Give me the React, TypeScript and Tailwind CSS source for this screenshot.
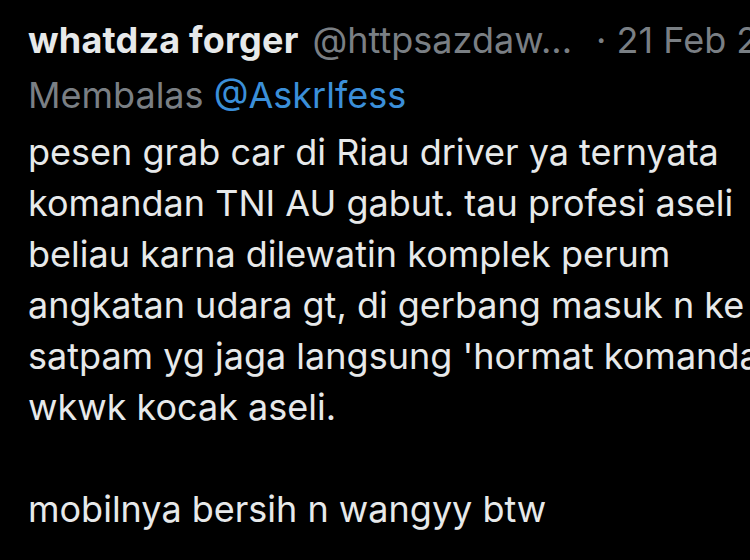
export default function App() {
  const lines = [
    "pesen grab car di Riau driver ya ternyata",
    "komandan TNI AU gabut. tau profesi aseli",
    "beliau karna dilewatin komplek perum",
    "angkatan udara gt, di gerbang masuk n ke",
    "satpam yg jaga langsung 'hormat komanda",
    "wkwk kocak aseli.",
    "",
    "mobilnya bersih n wangyy btw",
  ];

  return (
    <div className="h-[560px] w-[750px] overflow-hidden bg-black pl-[28px] font-['Inter',sans-serif] text-[36px] text-[#e7e9ea]">
      <div className="flex items-baseline whitespace-nowrap pt-[18px] leading-[44px]">
        <span className="font-bold tracking-[0.2px]">whatdza forger</span>
        <span className="ml-[14px] text-[#7a7f84]">@httpsazdaw...</span>
        <span className="ml-[24px] text-[#7a7f84]">· 21 Feb 2</span>
      </div>
      <div className="mt-[11px] whitespace-nowrap leading-[44px] text-[#7a7f84]">
        Membalas <span className="text-[#3b8fd9]">@Askrlfess</span>
      </div>
      <div className="mt-[10px] leading-[51px]">
        {lines.map((line, i) => (
          <div key={i} className="h-[51px] whitespace-nowrap">{line}</div>
        ))}
      </div>
    </div>
  );
}
